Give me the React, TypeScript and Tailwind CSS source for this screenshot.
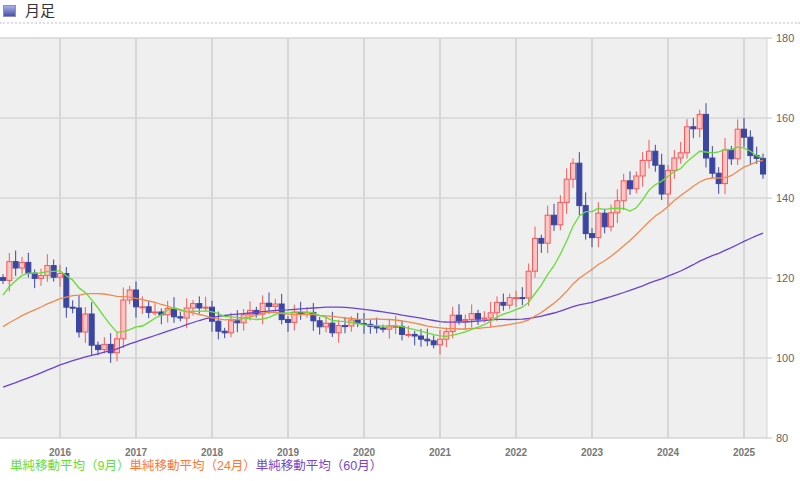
const closes = [
  119.4, 124.1, 122.5, 123.9, 121.2, 119.9, 120.6, 123.1, 120.2,
  121.1, 112.7, 112.5, 106.5, 111.0, 103.2, 102.1, 103.4, 101.3, 104.8, 114.5, 117.0,
  112.8, 112.8, 111.4, 111.5, 110.8, 112.4, 110.3, 110.0, 112.5, 113.6, 112.5, 112.7,
  109.2, 106.7, 106.3, 109.3, 108.8, 110.8, 111.9, 111.0, 113.7, 112.9, 113.5, 109.6,
  108.9, 111.4, 110.9, 111.4, 109.3, 107.8, 108.7, 106.3, 108.1, 108.0, 109.5, 108.6,
  108.4, 107.9, 107.5, 107.2, 107.8, 107.9, 105.9, 105.9, 105.5, 104.7, 104.3, 103.3,
  104.7, 106.6, 110.7, 109.3, 109.6, 111.1, 109.7, 110.0, 111.3, 113.9, 113.2, 115.1,
  115.1, 115.0, 121.7, 129.9, 128.7, 135.7, 133.3, 138.9, 144.7, 148.7, 138.1, 131.1,
  130.1, 136.2, 132.8, 136.3, 139.3, 144.3, 142.3, 145.5, 149.4, 151.7, 148.2, 141.0,
  146.9, 150.0, 151.3, 157.8, 157.3, 160.9, 150.0, 146.2, 143.6, 152.0, 149.8, 157.2,
  155.2, 150.6, 149.9, 146.0,
];

// rough history before Apr 2015 (index -60..-1) for the moving averages
const anchors: [number, number][] = [
  [-60, 94], [-58, 88], [-52, 81], [-46, 80], [-42, 78], [-38, 81], [-34, 79], [-31, 78],
  [-28, 86], [-25, 94], [-23, 101], [-16, 105], [-9, 102], [-6, 112], [-4, 120], [-1, 120],
];
const history: number[] = [];
for (let i = -60; i < 0; i++) {
  const k = anchors.findIndex((a) => a[0] >= i);
  const b = anchors[k];
  const a = anchors[Math.max(0, k - 1)];
  const t = b[0] === a[0] ? 0 : (i - a[0]) / (b[0] - a[0]);
  history.push(a[1] + (b[1] - a[1]) * t);
}
const all = [...history, ...closes];

const candles = closes.map((c, i) => {
  const o = i === 0 ? 120.1 : closes[i - 1];
  const body = Math.abs(c - o);
  const h = Math.max(o, c) + 0.8 + ((i * 7) % 5) * 0.45 + body * 0.1;
  const l = Math.min(o, c) - 0.8 - ((i * 11) % 4) * 0.5 - body * 0.1;
  return { o, c, h, l };
});

const X = (i: number) => 60 + ((i - 9) * 76) / 12;
const Y = (p: number) => 12 + (180 - p) * 4;

function sma(n: number) {
  return closes
    .map((_, i) => {
      const j = i + 60;
      const s = all.slice(j - n + 1, j + 1);
      const v = s.reduce((a, b) => a + b, 0) / n;
      return `${X(i).toFixed(1)},${Y(v).toFixed(1)}`;
    })
    .join(" ");
}

const years = [2016, 2017, 2018, 2019, 2020, 2021, 2022, 2023, 2024, 2025];
const prices = [180, 160, 140, 120, 100, 80];

export default function App() {
  return (
    <div className="w-[800px] h-[481px] bg-white overflow-hidden" style={{ fontFamily: '"Liberation Sans", "Noto Sans CJK JP", sans-serif' }}>
      <div className="h-[24px] flex items-center gap-[9px] px-[3px] border-b-2 border-dotted border-[#dcdcf4]">
        <div className="w-[13px] h-[12px] border border-[#8a8fcc] bg-gradient-to-b from-[#aab0e8] to-[#4a52a8] p-[1px]" />
        <span className="text-[15px] text-[#333]">月足</span>
      </div>
      <svg width="800" height="436" className="block mt-[2px]">
        <rect x="0" y="12" width="767" height="400" fill="#efefef" />
        {prices.map((p) => (
          <g key={p}>
            <line x1="0" x2="772" y1={Y(p)} y2={Y(p)} stroke="#d6d6d6" strokeWidth="1.5" />
            <text x="776" y={Y(p) + 4} fontSize="11" fill="#666">{p}</text>
          </g>
        ))}
        {years.map((y, k) => (
          <g key={y}>
            <line x1={60 + k * 76} x2={60 + k * 76} y1="12" y2="412" stroke="#d6d6d6" strokeWidth="2" />
            <text x={60 + k * 76} y="430" fontSize="10" fontWeight="bold" fill="#777" textAnchor="middle">{y}</text>
          </g>
        ))}
        <line x1="767" x2="767" y1="12" y2="412" stroke="#d6d6d6" />
        {candles.map((d, i) => {
          const up = d.c >= d.o;
          const col = up ? "#f25a5a" : "#3b46a2";
          const top = Y(Math.max(d.o, d.c));
          const hgt = Math.max(1, Y(Math.min(d.o, d.c)) - top);
          return (
            <g key={i}>
              <line x1={X(i)} x2={X(i)} y1={Y(d.h)} y2={Y(d.l)} stroke={col} strokeWidth="1" />
              <rect x={X(i) - 2.5} y={top} width="5" height={hgt} fill={up ? "#ffc4c4" : "#3b46a2"} stroke={col} strokeWidth="1" />
            </g>
          );
        })}
        <polyline points={sma(60)} fill="none" stroke="#6b44d0" strokeWidth="1.3" />
        <polyline points={sma(24)} fill="none" stroke="#ee8a50" strokeWidth="1.3" />
        <polyline points={sma(9)} fill="none" stroke="#66dd33" strokeWidth="1.3" />
      </svg>
      <div className="flex text-[12.5px] leading-none pl-[10px] -mt-[2px]">
        <span className="text-[#66dd33]">単純移動平均（9月）</span>
        <span className="text-[#ff7733]">単純移動平均（24月）</span>
        <span className="text-[#7744cc]">単純移動平均（60月）</span>
      </div>
    </div>
  );
}
